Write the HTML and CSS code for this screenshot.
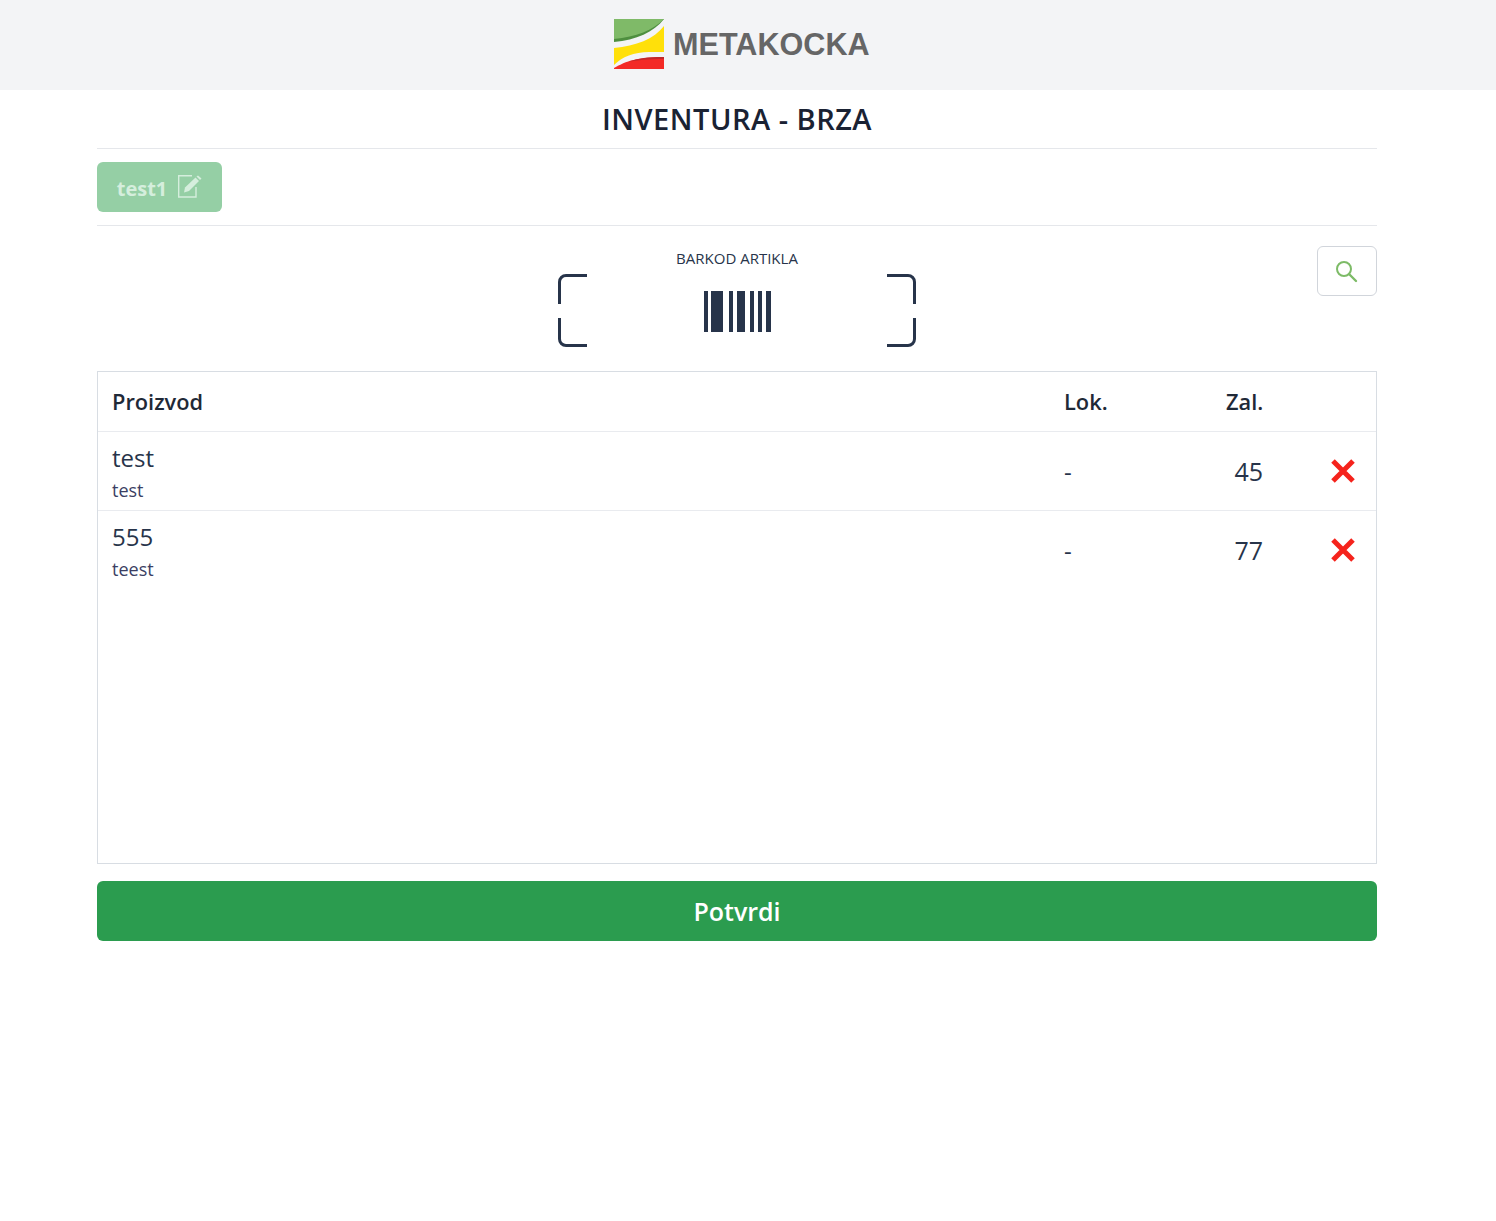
FILE: index.html
```html
<!DOCTYPE html>
<html lang="sl">
<head>
    <meta charset="UTF-8">
    <title>Inventura - brza</title>
    <link rel="stylesheet" href="styles.css">
</head>
<body>

    <!-- Glava -->
    <header class="glava">
        <svg class="logo_znak" width="50" height="50" viewBox="0 0 50 50">
            <path d="M0 0H50C40 13 22 21 0 23Z" fill="#4e8f3f"/>
            <path d="M0 0H50C39 11 22 18 0 20Z" fill="#7fba68"/>
            <path d="M0 29C22 27 40 20 50 7V33H35C20 33 8 38 0 46Z" fill="#ffe00a"/>
            <path d="M0 50V49C12 42 24 38 50 38V50Z" fill="#f32a26"/>
            <path d="M14 43C24 39 34 38 50 38V40C34 40 24 41 14 43Z" fill="#c0282a"/>
        </svg>
        <span class="logo_tekst">METAKOCKA</span>
    </header>

    <main class="vsebina">
        <h1 class="naslov">INVENTURA - BRZA</h1>

        <div class="vrstica_skladisce">
            <button class="gumb_skladisce" type="button">
                <span class="skladisce_ime">test1</span>
                <svg width="24" height="24" viewBox="0 0 24 24" fill="none" stroke="currentColor">
                    <path d="M18 12V22H.7V.7H14" stroke-width="1.4"/>
                    <path d="M6 17.500L7 12.500L17.500 2.500L21 6L11 16Z" fill="currentColor" stroke="none"/>
                    <path d="M18.500 1.500L20 .5L23.500 3.500L22 5Z" fill="currentColor" stroke="none"/>
                </svg>
            </button>
        </div>

        <!-- Skener in iskanje -->
        <section class="skener">
            <div class="skener_sredina">
                <div class="skener_oznaka">BARKOD ARTIKLA</div>
                <svg class="skener_okvir" width="358" height="73" viewBox="0 0 358 73" fill="none">
                    <g stroke="#27344a" stroke-width="3">
                        <path d="M29 1.500H8A6.500 6.500 0 0 0 1.500 8V30"/>
                        <path d="M1.500 44V65A6.500 6.500 0 0 0 8 71.500H29"/>
                        <path d="M329 1.500H350A6.500 6.500 0 0 1 356.500 8V30"/>
                        <path d="M356.500 44V65A6.500 6.500 0 0 1 350 71.500H329"/>
                    </g>
                    <g fill="#27344a">
                        <rect x="146" y="17" width="4" height="41"/>
                        <rect x="153" y="17" width="12" height="41"/>
                        <rect x="171" y="17" width="4" height="41"/>
                        <rect x="179" y="17" width="8" height="41"/>
                        <rect x="192" y="17" width="4" height="41"/>
                        <rect x="200" y="17" width="4" height="41"/>
                        <rect x="208" y="17" width="5" height="41"/>
                    </g>
                </svg>
            </div>
            <button class="gumb_iskanje" type="button">
                <svg width="24" height="24" viewBox="0 0 24 24" fill="none" stroke="#7dbb67" stroke-width="2">
                    <circle cx="10" cy="10" r="7"/>
                    <path d="M15 15L22 22" stroke-linecap="round" stroke-width="2.400"/>
                </svg>
            </button>
        </section>

        <!-- Seznam artiklov -->
        <section class="tabela">
            <div class="vrstica vrstica_glava">
                <div class="stolpec_proizvod">Proizvod</div>
                <div class="stolpec_lok">Lok.</div>
                <div class="stolpec_zal">Zal.</div>
                <div class="stolpec_brisi"></div>
            </div>
            <div class="vrstica">
                <div class="stolpec_proizvod">
                    <div class="artikel_ime">test</div>
                    <div class="artikel_sifra">test</div>
                </div>
                <div class="stolpec_lok">-</div>
                <div class="stolpec_zal">45</div>
                <div class="stolpec_brisi">
                    <svg width="26" height="26" viewBox="0 0 26 26"><path d="M3 3L23 23M23 3L3 23" stroke="#f5231c" stroke-width="5"/></svg>
                </div>
            </div>
            <div class="vrstica vrstica_brez">
                <div class="stolpec_proizvod">
                    <div class="artikel_ime">555</div>
                    <div class="artikel_sifra">teest</div>
                </div>
                <div class="stolpec_lok">-</div>
                <div class="stolpec_zal">77</div>
                <div class="stolpec_brisi">
                    <svg width="26" height="26" viewBox="0 0 26 26"><path d="M3 3L23 23M23 3L3 23" stroke="#f5231c" stroke-width="5"/></svg>
                </div>
            </div>
        </section>

        <button class="gumb_potrdi" type="button">Potvrdi</button>
    </main>

</body>
</html>
```

FILE: styles.css
```css
body {
    margin: 0;
    font-family: "Open Sans", "Noto Sans", sans-serif;
    color: #27344a;
    background-color: #fff;
}
button {
    font-family: inherit;
    cursor: pointer;
}
.glava {
    height: 90px;
    box-sizing: border-box;
    padding-left: 614px;
    display: flex;
    align-items: center;
    gap: 9px;
    background-color: #f3f4f6;
}
.logo_znak {
    margin-top: -3px;
}
.logo_tekst {
    font-family: "Liberation Sans", Arial, sans-serif;
    font-size: 30.600px;
    font-weight: bold;
    color: #666;
    margin-top: -1px;
}
.vsebina {
    width: 1280px;
    margin-left: 97px;
}
.naslov {
    height: 59px;
    line-height: 57px;
    margin: 0;
    box-sizing: border-box;
    border-bottom: 1px solid #e5e7eb;
    text-align: center;
    font-size: 29px;
    font-weight: 600;
    letter-spacing: 0.5px;
    color: #1a2233;
}
.vrstica_skladisce {
    height: 77px;
    box-sizing: border-box;
    padding-top: 13px;
    border-bottom: 1px solid #e5e7eb;
}
.gumb_skladisce {
    width: 125px;
    height: 50px;
    padding: 0;
    border: none;
    border-radius: 6px;
    display: flex;
    align-items: center;
    justify-content: center;
    gap: 11px;
    font-size: 20px;
    font-weight: 700;
    color: #d5eedd;
    background-color: #95cfa5;
}
.skladisce_ime {
    margin-top: 3px;
}
.skener {
    display: flex;
    justify-content: space-between;
    height: 145px;
    box-sizing: border-box;
    padding-top: 20px;
}
.skener_sredina {
    width: 358px;
    margin-left: 461px;
}
.skener_oznaka {
    height: 28px;
    line-height: 24px;
    text-align: center;
    font-size: 15px;
}
.skener_okvir {
    display: block;
}
.gumb_iskanje {
    width: 60px;
    height: 50px;
    padding: 4px 2px 0 0;
    border: 1px solid #d1d5db;
    border-radius: 6px;
    background-color: #fff;
}
.tabela {
    height: 493px;
    box-sizing: border-box;
    border: 1px solid #d8dde3;
}
.vrstica {
    display: flex;
    align-items: center;
    height: 79px;
    box-sizing: border-box;
    padding-left: 14px;
    border-bottom: 1px solid #e9ebef;
    font-size: 24px;
}
.vrstica_glava {
    height: 60px;
    font-size: 21.800px;
    font-weight: 600;
    color: #1f2937;
}
.vrstica_brez {
    height: 78px;
    border-bottom: none;
}
.stolpec_proizvod {
    flex: 1;
}
.stolpec_lok {
    width: 162px;
    box-sizing: border-box;
}
.stolpec_zal {
    width: 37px;
    font-size: 25px;
    text-align: right;
    white-space: nowrap;
}
.vrstica_glava .stolpec_zal {
    font-size: 21.800px;
}
.stolpec_brisi {
    width: 113px;
    box-sizing: border-box;
    padding-left: 67px;
    display: flex;
}
.artikel_ime {
    line-height: 37px;
}
.artikel_sifra {
    font-size: 18px;
    line-height: 28px;
    color: #3b3f63;
}
.gumb_potrdi {
    display: block;
    width: 100%;
    height: 60px;
    margin-top: 17px;
    border: none;
    border-radius: 6px;
    font-size: 25px;
    font-weight: 600;
    color: #fff;
    background-color: #2b9c4f;
}
```
